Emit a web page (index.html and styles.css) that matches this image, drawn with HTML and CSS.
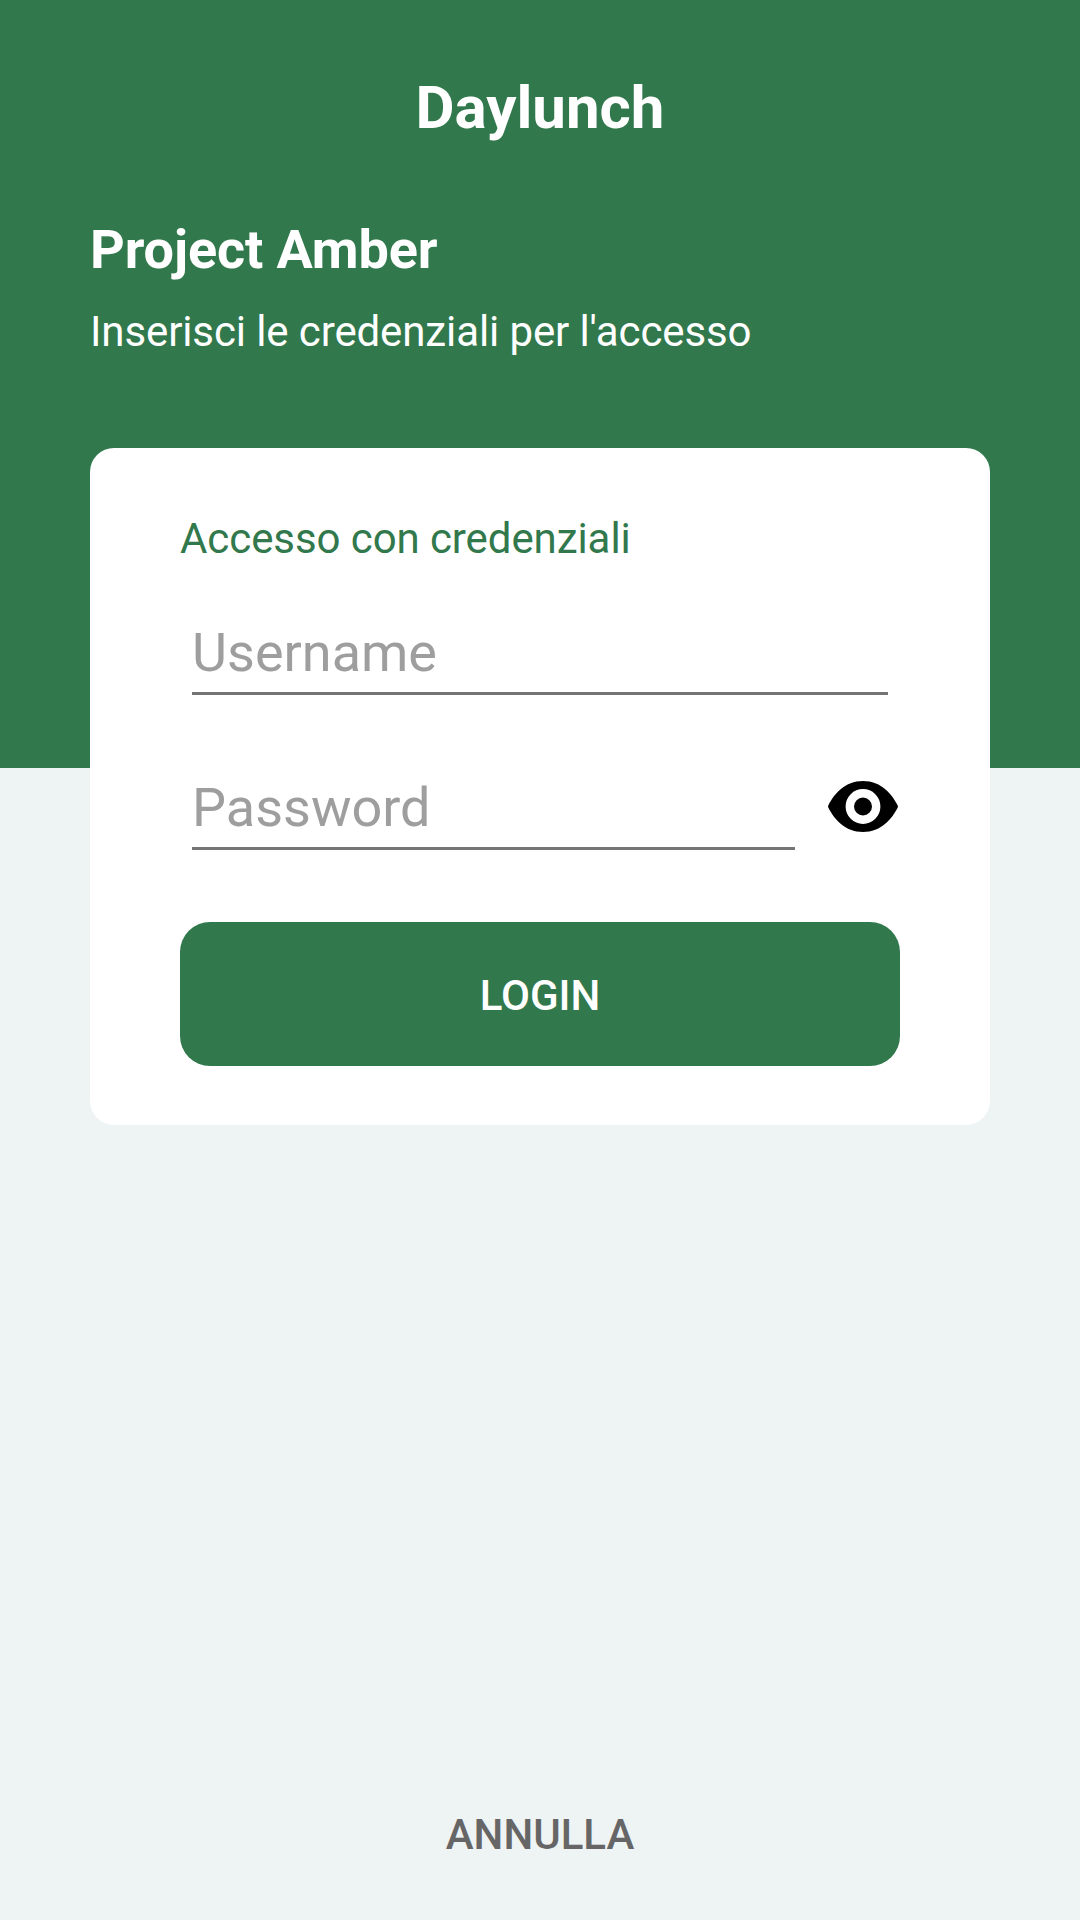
FILE: index.html
```html
<!DOCTYPE html>
<html lang="it">
<head>
<meta charset="utf-8">
<title>Daylunch</title>
<link rel="stylesheet" href="styles.css">
</head>
<body>
<main class="screen">
  <h1 class="brand">Daylunch</h1>
  <h2 class="project">Project Amber</h2>
  <p class="intro">Inserisci le credenziali per l'accesso</p>
  <form class="card">
    <h3 class="card-title">Accesso con credenziali</h3>
    <input class="field field-user" type="text" placeholder="Username">
    <div class="password-row">
      <input class="field field-pass" type="password" placeholder="Password">
      <svg class="eye" viewBox="0 0 70 51"><path d="M.3 24.500C6 13 17 0 35 0s29 13 34.700 24.500q.5 1 0 2C64 38 53 51 35 51S6 38 .3 26.500q-.5-1 0-2z"/><circle cx="35" cy="25.500" r="13.200" fill="none" stroke="#fff" stroke-width="8.400"/></svg>
    </div>
    <button class="login" type="button">LOGIN</button>
  </form>
  <button class="cancel" type="button">ANNULLA</button>
</main>
</body>
</html>
```
FILE: styles.css
```css
* { box-sizing: border-box; }
body { margin: 0; font-family: Roboto, sans-serif; }
h1, h2, h3, p { margin: 0; }
button, input { font-family: inherit; border: 0; padding: 0; background: none; }
.screen {
  height: 1920px;
  padding: 73px 90px 48px;
  display: flex;
  flex-direction: column;
  background: linear-gradient(#31784c 768px, #eef3f4 768px);
  color: #fff;
}
.brand { font-size: 60px; line-height: 70px; font-weight: 700; text-align: center; }
.project { margin-top: 75px; font-size: 54px; line-height: 64px; font-weight: 700; letter-spacing: -0.1px; }
.intro { margin-top: 25px; font-size: 42px; line-height: 50px; letter-spacing: -0.11px; }
.card {
  height: 677px;
  margin-top: 91px;
  padding: 66px 90px 59px;
  display: flex;
  flex-direction: column;
  border-radius: 24px;
  background: #fff;
}
.card-title { font-size: 42px; line-height: 50px; font-weight: 400; letter-spacing: -0.08px; color: #31784c; }
.field {
  height: 89px;
  padding-top: 6px;
  border-bottom: 3px solid #757575;
  border-radius: 0;
  font-size: 54px;
  color: #222;
}
.field::placeholder { color: #9e9e9e; opacity: 1; }
.field-user { margin: 42px 12px 0; }
.password-row { margin: 66px 2px 0 12px; display: flex; justify-content: space-between; }
.field-pass { width: 603px; }
.eye { width: 70px; height: 51px; margin-top: 20px; }
.login {
  height: 144px;
  margin-top: auto;
  padding-top: 2px;
  border-radius: 30px;
  background: #31784c;
  color: #fff;
  font-size: 42px;
  font-weight: 500;
}
.cancel {
  align-self: center;
  margin-top: auto;
  font-size: 42px;
  line-height: 74px;
  font-weight: 500;
  color: #666;
}
```
